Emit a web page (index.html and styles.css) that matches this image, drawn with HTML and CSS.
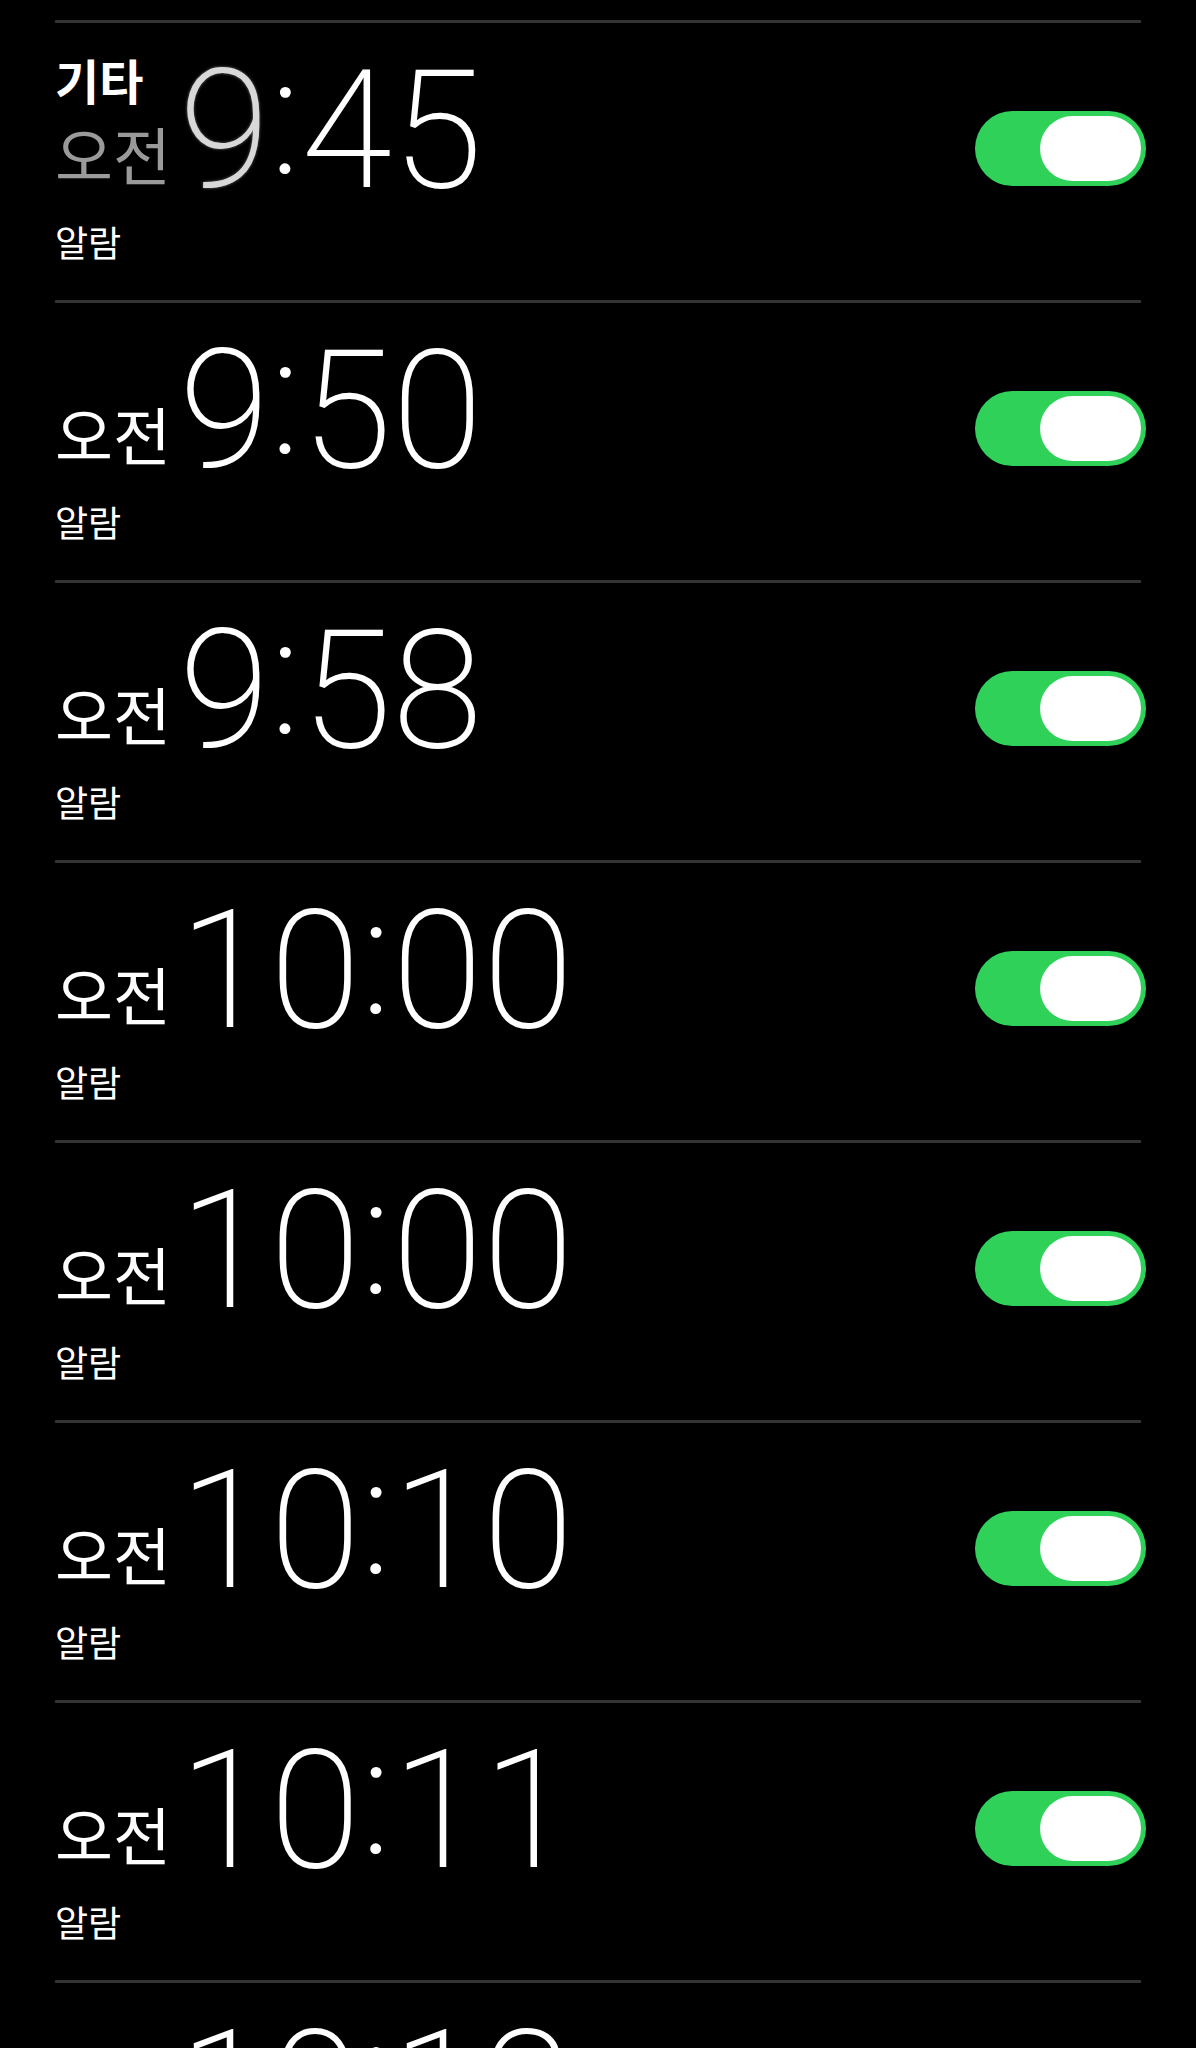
FILE: index.html
```html
<!DOCTYPE html>
<html lang="ko">
<head>
    <meta charset="UTF-8">
    <meta name="viewport" content="width=device-width, initial-scale=1.0">
    <title>알람</title>
    <link rel="stylesheet" href="styles.css">
</head>
<body>
    <main class="alarms">
        <h2 class="section-title">기타</h2>

        <ul class="alarm-list">
            <li class="alarm alarm-faded">
                <div class="alarm-info">
                    <div class="alarm-time"><span class="ampm">오전</span><span class="first">9</span><span class="colon">:</span>45</div>
                    <div class="alarm-label">알람</div>
                </div>
                <span class="switch"><span class="knob"></span></span>
            </li>
            <li class="alarm">
                <div class="alarm-info">
                    <div class="alarm-time"><span class="ampm">오전</span>9<span class="colon">:</span>50</div>
                    <div class="alarm-label">알람</div>
                </div>
                <span class="switch"><span class="knob"></span></span>
            </li>
            <li class="alarm">
                <div class="alarm-info">
                    <div class="alarm-time"><span class="ampm">오전</span>9<span class="colon">:</span>58</div>
                    <div class="alarm-label">알람</div>
                </div>
                <span class="switch"><span class="knob"></span></span>
            </li>
            <li class="alarm">
                <div class="alarm-info">
                    <div class="alarm-time"><span class="ampm">오전</span>10<span class="colon">:</span>00</div>
                    <div class="alarm-label">알람</div>
                </div>
                <span class="switch"><span class="knob"></span></span>
            </li>
            <li class="alarm">
                <div class="alarm-info">
                    <div class="alarm-time"><span class="ampm">오전</span>10<span class="colon">:</span>00</div>
                    <div class="alarm-label">알람</div>
                </div>
                <span class="switch"><span class="knob"></span></span>
            </li>
            <li class="alarm">
                <div class="alarm-info">
                    <div class="alarm-time"><span class="ampm">오전</span>10<span class="colon">:</span>10</div>
                    <div class="alarm-label">알람</div>
                </div>
                <span class="switch"><span class="knob"></span></span>
            </li>
            <li class="alarm">
                <div class="alarm-info">
                    <div class="alarm-time"><span class="ampm">오전</span>10<span class="colon">:</span>11</div>
                    <div class="alarm-label">알람</div>
                </div>
                <span class="switch"><span class="knob"></span></span>
            </li>
            <li class="alarm">
                <div class="alarm-info">
                    <div class="alarm-time"><span class="ampm">오전</span>10<span class="colon">:</span>12</div>
                    <div class="alarm-label">알람</div>
                </div>
                <span class="switch"><span class="knob"></span></span>
            </li>
        </ul>
    </main>
</body>
</html>
```

FILE: styles.css
```css
html, body {
    height: 100%;
    overflow: hidden;
}

body {
    margin: 0;
    padding: 0;
    background: #000;
    color: #fff;
    font-family: "Noto Sans CJK KR", "Noto Sans", sans-serif;
}

.alarms {
    position: relative;
    padding: 20px 55px 0 55px;
    width: 1086px;
}

.section-title {
    position: absolute;
    top: 55px;
    left: 55px;
    margin: 0;
    font-size: 48px;
    line-height: 1;
    font-weight: 700;
    color: #fff;
    z-index: 2;
}

.alarm-list {
    list-style: none;
    margin: 0;
    padding: 0;
}

.alarm {
    display: flex;
    justify-content: space-between;
    align-items: flex-start;
    border-top: 3px solid #333;
    padding: 25px 0 41px 0;
}

.alarm-time {
    font-family: Roboto, "Liberation Sans", sans-serif;
    font-weight: 200;
    font-size: 165px;
    line-height: 1;
    white-space: nowrap;
}

.ampm {
    font-family: "Noto Sans CJK KR", sans-serif;
    font-weight: 400;
    font-size: 63px;
    vertical-align: 7px;
    margin-right: 8px;
}

.colon {
    line-height: 0;
    vertical-align: 14px;
}

.alarm-label {
    margin-top: 10px;
    font-size: 36px;
    line-height: 1;
}

.alarm-faded .ampm {
    color: #9a9a9a;
}

.alarm-faded .first {
    color: #d8d8d8;
    text-shadow: 0 0 3px #777;
}

.switch {
    display: flex;
    justify-content: flex-end;
    align-items: center;
    width: 171px;
    height: 75px;
    margin-top: 63px;
    margin-right: -5px;
    padding: 0 5px;
    box-sizing: border-box;
    background: #30d158;
    border-radius: 38px;
}

.knob {
    width: 101px;
    height: 65px;
    background: #fff;
    border-radius: 33px;
}
```
